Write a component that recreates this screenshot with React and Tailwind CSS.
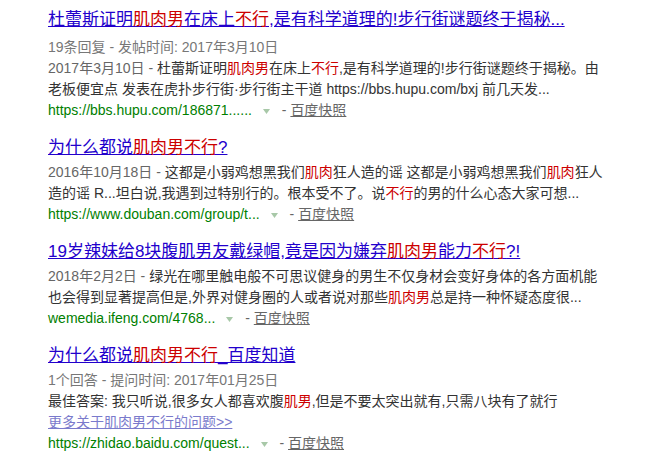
import React from "react";

const R = ({ children }) => <span className="text-[#cc0000]">{children}</span>;

const Tri = () => (
  <svg width="7" height="5" viewBox="0 0 7 5" className="inline-block mx-[8px] align-middle">
    <polygon points="0,0 7,0 3.5,5" fill="#a8c8a8" />
  </svg>
);

const UrlLine = ({ url }) => (
  <div className="h-[21px] leading-[21px] whitespace-nowrap">
    <span className="text-[#008000]">{url}</span>
    <span className="ml-[3px]"><Tri /></span>
    <span className="text-[#666]"> - </span>
    <span className="text-[#666] underline">百度快照</span>
  </div>
);

const Line = ({ children, className = "" }) => (
  <div className={"h-[21px] leading-[21px] whitespace-nowrap text-[#333] " + className}>{children}</div>
);

const Title = ({ children, className = "" }) => (
  <div className={"h-[24px] leading-[24px] text-[17px] whitespace-nowrap text-[#2200cc] underline " + className}>
    {children}
  </div>
);

export default function App() {
  return (
    <div className="w-[649px] h-[452px] bg-white overflow-hidden font-['Liberation_Sans','Noto_Sans_CJK_SC',sans-serif] text-[14px] pl-[48px] pt-[8px]">
      <div className="flex flex-col gap-[15px]">
        <div>
          <Title className="mb-[5px]">
            杜蕾斯证明<R>肌肉男</R>在床上<R>不行</R>,是有科学道理的!步行街谜题终于揭秘...
          </Title>
          <Line className="text-[#777]">19条回复 - 发帖时间: 2017年3月10日</Line>
          <Line>
            <span className="text-[#666]">2017年3月10日 - </span>杜蕾斯证明<R>肌肉男</R>在床上<R>不行</R>,是有科学道理的!步行街谜题终于揭秘。由
          </Line>
          <Line>老板便宜点 发表在虎扑步行街·步行街主干道 https://bbs.hupu.com/bxj 前几天发...</Line>
          <UrlLine url="https://bbs.hupu.com/186871......" />
        </div>
        <div>
          <Title className="mb-[2px]">
            为什么都说<R>肌肉男不行</R>?
          </Title>
          <Line>
            <span className="text-[#666]">2016年10月18日 - </span>这都是小弱鸡想黑我们<R>肌肉</R>狂人造的谣 这都是小弱鸡想黑我们<R>肌肉</R>狂人
          </Line>
          <Line>
            造的谣 R...坦白说,我遇到过特别行的。根本受不了。说<R>不行</R>的男的什么心态大家可想...
          </Line>
          <UrlLine url="https://www.douban.com/group/t..." />
        </div>
        <div>
          <Title className="mb-[2px]">
            19岁辣妹给8块腹肌男友戴绿帽,竟是因为嫌弃<R>肌肉男</R>能力<R>不行</R>?!
          </Title>
          <Line>
            <span className="text-[#666]">2018年2月2日 - </span>绿光在哪里触电般不可思议健身的男生不仅身材会变好身体的各方面机能
          </Line>
          <Line>
            也会得到显著提高但是,外界对健身圈的人或者说对那些<R>肌肉男</R>总是持一种怀疑态度很...
          </Line>
          <UrlLine url="wemedia.ifeng.com/4768..." />
        </div>
        <div>
          <Title className="mb-[2px]">
            为什么都说<R>肌肉男不行</R>_百度知道
          </Title>
          <Line className="text-[#777]">1个回答 - 提问时间: 2017年01月25日</Line>
          <Line>
            最佳答案: 我只听说,很多女人都喜欢腹<R>肌男</R>,但是不要太突出就有,只需八块有了就行
          </Line>
          <Line className="!text-[#7a7acc] underline">更多关于肌肉男不行的问题&gt;&gt;</Line>
          <UrlLine url="https://zhidao.baidu.com/quest..." />
        </div>
      </div>
    </div>
  );
}
